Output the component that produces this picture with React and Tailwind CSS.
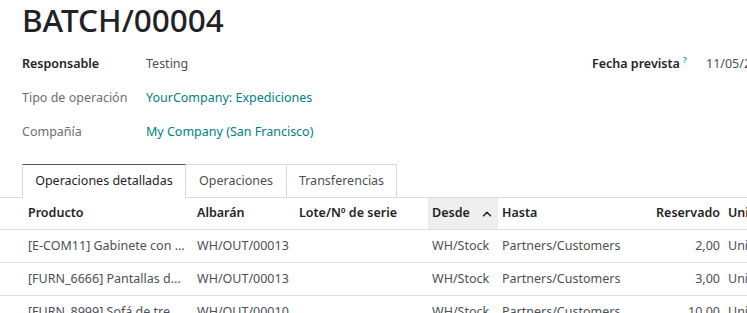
import { ChevronUp } from 'lucide-react';

const rows = [
  { product: '[E-COM11] Gabinete con …', picking: 'WH/OUT/00013', from: 'WH/Stock', to: 'Partners/Customers', qty: '2,00' },
  { product: '[FURN_6666] Pantallas d…', picking: 'WH/OUT/00013', from: 'WH/Stock', to: 'Partners/Customers', qty: '3,00' },
  { product: '[FURN_8999] Sofá de tre…', picking: 'WH/OUT/00010', from: 'WH/Stock', to: 'Partners/Customers', qty: '10,00' },
];

const cols = 'grid grid-cols-[193px_102px_133px_70px_126px_100px_160px]';

function Field({ label, bold, children }) {
  return (
    <div className="flex h-[34px] items-center">
      <div className={bold ? 'w-[124px] font-semibold text-[#212529]' : 'w-[124px] text-[#6b6f74]'}>{label}</div>
      <div>{children}</div>
    </div>
  );
}

export default function App() {
  return (
    <div className="h-[313px] w-[747px] overflow-hidden bg-white font-['Noto_Sans',sans-serif] text-[12.5px] text-[#374151]">
      <div className="w-[900px]">
        <h1 className="pl-[22px] text-[31.5px] font-medium leading-[40px] text-[#1f2328]">BATCH/00004</h1>

        <div className="mt-[7px] flex pl-[22px]">
          <div className="w-[570px]">
            <Field label="Responsable" bold>
              <span className="text-[#4b5056]">Testing</span>
            </Field>
            <Field label="Tipo de operación">
              <span className="text-[#017e84]">YourCompany: Expediciones</span>
            </Field>
            <Field label="Compañía">
              <span className="text-[#017e84]">My Company (San Francisco)</span>
            </Field>
          </div>
          <div className="flex h-[34px] items-center">
            <div className="w-[114px] font-semibold text-[#212529]">
              Fecha prevista<sup className="ml-[3px] text-[9px] font-semibold text-[#17a2b8]">?</sup>
            </div>
            <div className="whitespace-nowrap text-[#4b5056]">11/05/2024 10:00:00</div>
          </div>
        </div>

        <div className="mt-[15px] flex h-[34px] border-b border-[#d8dadd] pl-[22px]">
          <div className="-mb-px flex w-[164px] items-center justify-center border-x border-t border-[#d8dadd] border-t-[#5b5566] bg-white text-[#1f2328]">
            Operaciones detalladas
          </div>
          <div className="flex w-[101px] items-center justify-center border-r border-t border-[#d8dadd] text-[#4b5056]">Operaciones</div>
          <div className="flex w-[110px] items-center justify-center border-r border-t border-[#d8dadd] text-[#4b5056]">Transferencias</div>
        </div>

        <div className={`${cols} h-[32px] items-stretch border-b border-[#dee2e6] font-semibold text-[#1f2328]`}>
          <div className="flex items-center pl-[28px]">Producto</div>
          <div className="flex items-center pl-[4px]">Albarán</div>
          <div className="flex items-center pl-[4px]">Lote/Nº de serie</div>
          <div className="flex items-center gap-[10px] bg-[#eeeeee] pl-[4px]">
            Desde
            <ChevronUp size={14} strokeWidth={2.5} />
          </div>
          <div className="flex items-center pl-[4px]">Hasta</div>
          <div className="flex items-center justify-end pr-[4px]">Reservado</div>
          <div className="flex items-center pl-[4px]">Unidad de medida</div>
        </div>

        {rows.map((r) => (
          <div key={r.product} className={`${cols} h-[33px] items-stretch border-b border-[#dee2e6] text-[#4b5056]`}>
            <div className="flex items-center whitespace-nowrap pl-[28px]">{r.product}</div>
            <div className="flex items-center pl-[4px]">{r.picking}</div>
            <div />
            <div className="flex items-center pl-[4px]">{r.from}</div>
            <div className="flex items-center pl-[4px]">{r.to}</div>
            <div className="flex items-center justify-end pr-[4px]">{r.qty}</div>
            <div className="flex items-center pl-[4px]">Unidades</div>
          </div>
        ))}
      </div>
    </div>
  );
}
